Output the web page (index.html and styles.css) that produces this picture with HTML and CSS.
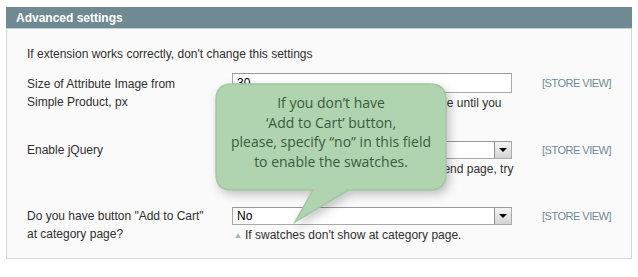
FILE: index.html
```html
<!DOCTYPE html>
<html lang="en">
<head>
    <meta charset="UTF-8">
    <title>Advanced settings</title>
    <link rel="stylesheet" href="styles.css">
</head>
<body>
    <div class="section">
        <div class="section-head">Advanced settings</div>
        <div class="section-body">
            <p class="intro">If extension works correctly, don't change this settings</p>

            <div class="row row-input">
                <div class="label">Size of Attribute Image from<br>Simple Product, px</div>
                <div class="value">
                    <div class="text-field">30</div>
                    <p class="note">Leave it default and don't change value until you</p>
                </div>
                <div class="scope">[STORE VIEW]</div>
            </div>

            <div class="row row-select">
                <div class="label">Enable jQuery</div>
                <div class="value">
                    <div class="select-field"><span>Yes</span><span class="arrow"></span></div>
                    <p class="note">If the swatches don't work at the frontend page, try</p>
                </div>
                <div class="scope">[STORE VIEW]</div>
            </div>

            <div class="row row-select last">
                <div class="label">Do you have button "Add to Cart"<br>at category page?</div>
                <div class="value">
                    <div class="select-field"><span>No</span><span class="arrow"></span></div>
                    <p class="note">If swatches don't show at category page.</p>
                </div>
                <div class="scope">[STORE VIEW]</div>
            </div>
        </div>
    </div>

    <!-- подсказка поверх формы -->
    <div class="tip">
        <svg class="tip-shape" width="240" height="146" viewBox="0 0 240 146">
            <path d="M17 1 H215 Q231 1 231 17 V91 Q231 107 215 107 H133 L80 139 L98 107 H17 Q1 107 1 91 V17 Q1 1 17 1 Z"
                  fill="#afd4af" stroke="#9fc8a0" stroke-width="1.5"/>
        </svg>
        <div class="tip-text">
            If you don’t have<br>
            ‘Add to Cart’ button,<br>
            please, specify “no” in this field<br>
            to enable the swatches.
        </div>
    </div>
</body>
</html>
```

FILE: styles.css
```css
body {
    margin: 0;
    padding: 7px 6px 0 6px;
    background-color: #fff;
    font-family: "Liberation Sans", Arial, sans-serif;
    font-size: 12px;
    color: #2f2f2f;
    position: relative;
}
.section {
    width: 626px;
}
.section-head {
    height: 22px;
    line-height: 22px;
    padding-left: 10px;
    background-color: #6f8a92;
    border-bottom: 1px solid #c4d0d3;
    box-sizing: border-box;
    color: #fff;
    font-weight: bold;
    font-size: 12px;
}
.section-body {
    background-color: #fafafa;
    border: 1px solid #d6d6d6;
    border-top: none;
    padding: 16px 20px 14px 20px;
}
.intro {
    margin: 0 0 10px 0;
    line-height: 18px;
}
.row {
    display: grid;
    grid-template-columns: 205px 280px minmax(0, 1fr);
    margin-bottom: 29px;
}
.row.last {
    margin-bottom: 0;
}
.label {
    line-height: 18px;
}
.row-input .label {
    padding-top: 2px;
}
.text-field,
.select-field {
    background-color: #fff;
    border: 1px solid #aaa;
    border-top-color: #999;
    box-sizing: border-box;
    padding-left: 4px;
    font-size: 12px;
    color: #000;
}
.text-field {
    height: 20px;
    line-height: 18px;
}
.select-field {
    height: 18px;
    line-height: 16px;
    display: flex;
    justify-content: space-between;
}
.select-field .arrow {
    width: 17px;
    height: 16px;
    box-sizing: border-box;
    border-left: 1px solid #8f8f8f;
    background: linear-gradient(#f4f4f4, #d4d4d4);
    position: relative;
}
.select-field .arrow::after {
    content: "";
    position: absolute;
    left: 4px;
    top: 6px;
    border-left: 4px solid transparent;
    border-right: 4px solid transparent;
    border-top: 4px solid #000;
}
.note {
    margin: 1px 0 0 0;
    line-height: 18px;
    padding-left: 13px;
    position: relative;
    white-space: nowrap;
}
.note::before {
    content: "";
    position: absolute;
    left: 3px;
    top: 7px;
    border-left: 3px solid transparent;
    border-right: 3px solid transparent;
    border-bottom: 5px solid #a9bcbf;
}
.scope {
    padding-left: 30px;
    line-height: 18px;
    font-size: 11px;
    letter-spacing: -0.5px;
    color: #6f8a99;
    white-space: nowrap;
}
.row-input .scope {
    padding-top: 1px;
}
.tip {
    position: absolute;
    left: 215px;
    top: 83px;
    width: 240px;
    height: 146px;
}
.tip-shape {
    display: block;
    filter: drop-shadow(3px 4px 5px rgba(0, 0, 0, 0.22));
}
.tip-text {
    position: absolute;
    left: 1px;
    top: 10px;
    width: 230px;
    text-align: center;
    font-family: "Open Sans", sans-serif;
    font-size: 14px;
    line-height: 19.5px;
    color: #3c5b3d;
}
```
